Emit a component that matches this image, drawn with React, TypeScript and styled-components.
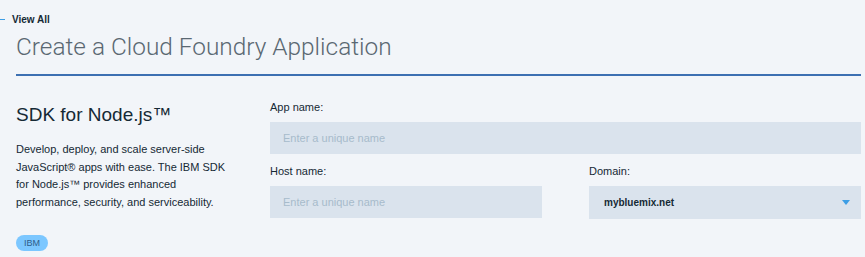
import styled, { createGlobalStyle } from "styled-components";

const Global = createGlobalStyle`
  html, body {
    margin: 0;
    padding: 0;
    background: #f2f5f9;
  }
  body {
    font-family: "Liberation Sans", Arial, sans-serif;
    color: #152935;
  }
`;

const Page = styled.section`
  width: 865px;
  height: 257px;
  overflow: hidden;
  background: #f2f5f9;
  padding: 14px 4px 0 16px;
  box-sizing: border-box;
`;

const Back = styled.a`
  position: relative;
  display: block;
  margin-left: -4px;
  font-size: 10px;
  font-weight: 700;
  color: #152935;
  text-decoration: none;
  line-height: 12px;

  &::before {
    content: "";
    position: absolute;
    left: -12px;
    top: 5px;
    width: 5px;
    height: 1px;
    background: #3d9ee5;
  }
`;

const Title = styled.h1`
  margin: 6px 0 0;
  padding-bottom: 12px;
  border-bottom: 2px solid #3d70b2;
  font-family: Roboto, "Liberation Sans", sans-serif;
  font-weight: 300;
  font-size: 24.4px;
  line-height: 30px;
  color: #5a6872;
`;

const Body = styled.div`
  display: grid;
  grid-template-columns: 254px 1fr;
  align-items: start;
  margin-top: 24px;
`;

const Info = styled.div`
  display: flex;
  flex-direction: column;
`;

const Product = styled.h2`
  margin: 4px 0 0;
  font-weight: 400;
  font-size: 19px;
  line-height: 22px;
  color: #152935;
`;

const Desc = styled.p`
  margin: 15px 0 0;
  font-size: 11px;
  line-height: 17.5px;
  color: #152935;
  width: 215px;
`;

const Tag = styled.span`
  align-self: flex-start;
  margin-top: 24px;
  padding: 0 8px;
  height: 16px;
  line-height: 16px;
  border-radius: 8px;
  background: #7cc7ff;
  color: #2d5d8a;
  font-size: 9px;
`;

const Form = styled.div`
  display: grid;
  grid-template-columns: 272px 272px;
  justify-content: space-between;
  align-content: start;
`;

const Field = styled.label<{ $wide?: boolean }>`
  display: flex;
  flex-direction: column;
  grid-column: ${({ $wide }) => ($wide ? "1 / -1" : "auto")};
  margin-bottom: 10px;
`;

const Label = styled.span`
  font-size: 11px;
  line-height: 14px;
  margin-bottom: 8px;
  color: #152935;
`;

const Input = styled.input`
  height: 32px;
  box-sizing: border-box;
  border: none;
  outline: none;
  background: #dae3ed;
  padding: 0 13px;
  font-family: "Liberation Sans", Arial, sans-serif;
  font-size: 11px;
  color: #152935;

  &::placeholder {
    color: #a7bbcb;
  }
`;

const Select = styled.div`
  height: 33px;
  display: flex;
  align-items: center;
  justify-content: space-between;
  padding: 0 11px 0 15px;
  background: #dae3ed;
  font-size: 10px;
  font-weight: 700;
  color: #152935;
`;

const Caret = styled.svg`
  width: 8px;
  height: 5px;
  fill: #3d9ee5;
`;

export default function App() {
  return (
    <>
      <Global />
      <Page>
        <Back href="#">View All</Back>
        <Title>Create a Cloud Foundry Application</Title>
        <Body>
          <Info>
            <Product>SDK for Node.js™</Product>
            <Desc>
              Develop, deploy, and scale server-side JavaScript® apps with
              ease. The IBM SDK for Node.js™ provides enhanced performance,
              security, and serviceability.
            </Desc>
            <Tag>IBM</Tag>
          </Info>
          <Form>
            <Field $wide>
              <Label>App name:</Label>
              <Input placeholder="Enter a unique name" />
            </Field>
            <Field>
              <Label>Host name:</Label>
              <Input placeholder="Enter a unique name" />
            </Field>
            <Field>
              <Label>Domain:</Label>
              <Select>
                mybluemix.net
                <Caret viewBox="0 0 8 5">
                  <path d="M0 0h8L4 5z" />
                </Caret>
              </Select>
            </Field>
          </Form>
        </Body>
      </Page>
    </>
  );
}
